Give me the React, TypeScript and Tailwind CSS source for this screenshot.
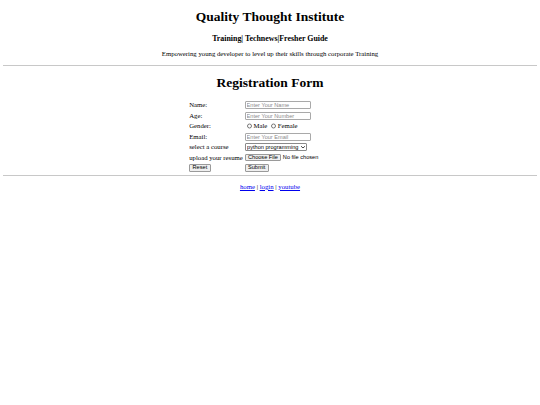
import React from "react";

const rows = "flex items-center px-[0.42px]";
const field =
  "h-[8px] w-[66px] rounded-[1px] border border-[#a9a9a9] bg-white px-[1px] text-[5.6px] leading-[6px] font-['Liberation_Sans',Arial,sans-serif] outline-none placeholder:text-[#8a8a8a]";
const button =
  "h-[7.6px] rounded-[1px] border border-[#9a9a9a] bg-[#efefef] px-[2.4px] text-[5.6px] leading-[5px] font-['Liberation_Sans',Arial,sans-serif] text-black";

const App = () => {
  return (
    <div className="flex min-h-screen flex-col items-center bg-white px-[3.4px] font-['Liberation_Serif','Times_New_Roman',serif] text-black">
      {/* Header */}
      <h1 className="mt-[9px] text-[13.5px] leading-[15.5px] font-bold">
        Quality Thought Institute
      </h1>
      <h3 className="mt-[9px] text-[7.9px] leading-[9px] font-bold">
        Training| Technews|Fresher Guide
      </h3>
      <p className="mt-[7.9px] text-[6.75px] leading-[7.8px]">
        Empowering young developer to level up their skills through corporate
        Training
      </p>
      <div className="mt-[6.6px] h-px self-stretch bg-[#c8c8c8]" />

      {/* Form */}
      <h1 className="mt-[9px] text-[13.5px] leading-[15.5px] font-bold">
        Registration Form
      </h1>
      <form
        className="mt-[10.3px] grid auto-rows-[9.58px] grid-cols-[54.6px_107px] items-center gap-[0.84px] text-[6.75px] leading-[7.8px]"
        onSubmit={(e) => e.preventDefault()}
      >
        <div className={rows}>Name:</div>
        <div className={rows}>
          <input type="text" placeholder="Enter Your Name" className={field} />
        </div>

        <div className={rows}>Age:</div>
        <div className={rows}>
          <input type="text" placeholder="Enter Your Number" className={field} />
        </div>

        <div className={rows}>Gender:</div>
        <div className={rows}>
          <input
            type="radio"
            name="gender"
            className="m-0 ml-[2.1px] mr-[1.3px] h-[5.4px] w-[5.4px]"
          />
          <span>Male</span>
          <span className="w-[1.7px]" />
          <input
            type="radio"
            name="gender"
            className="m-0 ml-[2.1px] mr-[1.3px] h-[5.4px] w-[5.4px]"
          />
          <span>Female</span>
        </div>

        <div className={rows}>Email:</div>
        <div className={rows}>
          <input type="email" placeholder="Enter Your Email" className={field} />
        </div>

        <div className={rows}>select a course</div>
        <div className={rows}>
          <div className="relative">
            <select className="block h-[8px] w-[62px] appearance-none rounded-[1px] border border-[#8a8a8a] bg-white pl-[1.5px] pr-[6px] text-[5.6px] leading-[6px] font-['Liberation_Sans',Arial,sans-serif] text-black outline-none">
              <option>python programming</option>
              <option>java programming</option>
              <option>web development</option>
            </select>
            <svg
              viewBox="0 0 10 6"
              className="pointer-events-none absolute top-[2.8px] right-[1.4px] h-[2.6px] w-[4px]"
            >
              <path
                d="M1 1l4 4 4-4"
                fill="none"
                stroke="#000"
                strokeWidth="2"
                strokeLinecap="round"
                strokeLinejoin="round"
              />
            </svg>
          </div>
        </div>

        <div className={`${rows} whitespace-nowrap`}>upload your resume</div>
        <div className={`${rows} whitespace-nowrap`}>
          <span className={`${button} flex items-center`}>Choose File</span>
          <span className="ml-[1.6px] text-[5.6px] font-['Liberation_Sans',Arial,sans-serif]">
            No file chosen
          </span>
        </div>

        <div className={rows}>
          <button type="reset" className={button}>
            Reset
          </button>
        </div>
        <div className={rows}>
          <button type="submit" className={button}>
            Submit
          </button>
        </div>
      </form>
      <div className="mt-[2.6px] h-px self-stretch bg-[#c8c8c8]" />

      {/* Footer links */}
      <p className="mt-[6.75px] text-[6.75px] leading-[7.8px]">
        <a href="#" className="text-[#0000ee] underline">
          home
        </a>{" "}
        |{" "}
        <a href="#" className="text-[#0000ee] underline">
          login
        </a>{" "}
        |{" "}
        <a href="#" className="text-[#0000ee] underline">
          youtube
        </a>
      </p>
    </div>
  );
};

export default App;
